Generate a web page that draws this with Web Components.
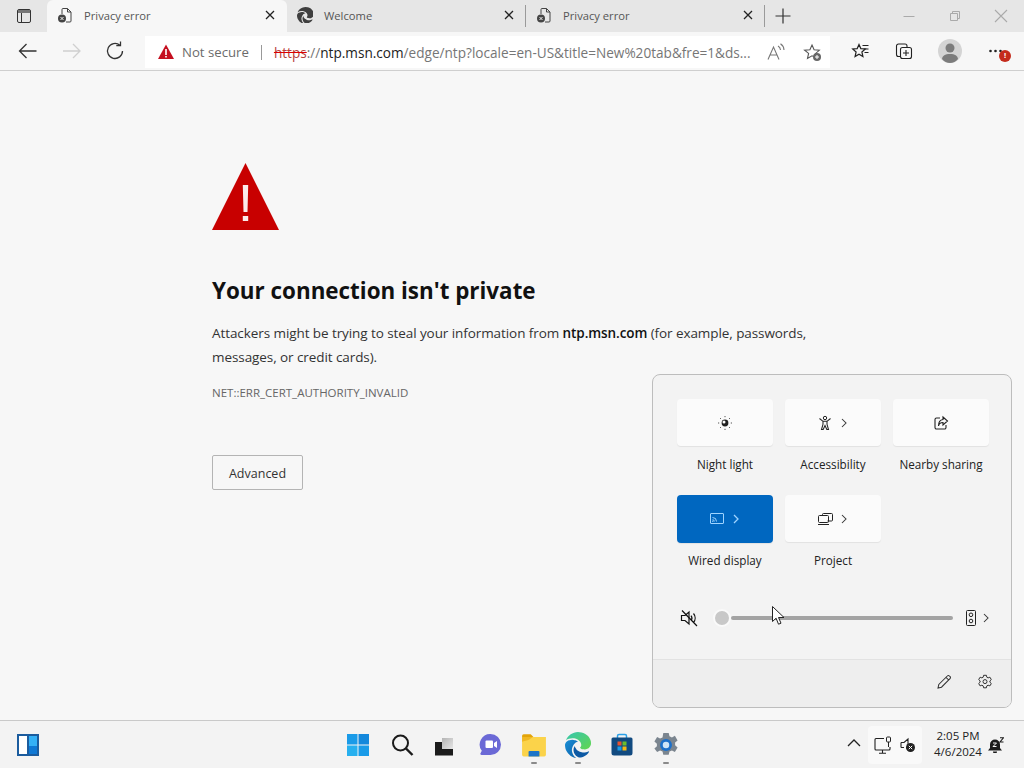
<!DOCTYPE html>
<html lang="en">
<head>
<meta charset="utf-8">
<title>Privacy error</title>
<style>
    html, body { margin: 0; height: 100%; overflow: hidden; }
    body {
        display: flex;
        flex-direction: column;
        width: 1024px;
        height: 768px;
        position: relative;
        background: #f7f7f7;
        color: #1b1b1b;
        font-family: "Open Sans", "Liberation Sans", sans-serif;
    }
</style>
</head>
<body>
<edge-tabstrip>
    <edge-tab active favicon="doc-error">Privacy error</edge-tab>
    <edge-tab favicon="edge-gray">Welcome</edge-tab>
    <edge-tab favicon="doc-error">Privacy error</edge-tab>
</edge-tabstrip>
<edge-toolbar></edge-toolbar>
<error-page></error-page>
<quick-settings>
    <quick-tile label="Night light" icon="night"></quick-tile>
    <quick-tile label="Accessibility" icon="access" more></quick-tile>
    <quick-tile label="Nearby sharing" icon="share"></quick-tile>
    <quick-tile label="Wired display" icon="cast" more on></quick-tile>
    <quick-tile label="Project" icon="project" more></quick-tile>
</quick-settings>
<mouse-cursor></mouse-cursor>
<win-taskbar></win-taskbar>
<script>
    const ICONS = {
        'tabs': '<rect x="2.5" y="2.5" width="13" height="13" rx="1.5" fill="none" stroke="#333"/><path d="M3 3h12v3H3z" fill="#777"/><path d="M6.5 6v9" stroke="#333"/>',
        'doc-error': '<path d="M6 1.500h4.500L14 5v9a1 1 0 0 1-1 1H9M6 1.500a1 1 0 0 0-1 1V7M10.500 1.500V5H14" fill="none" stroke="#444"/><circle cx="5" cy="11.500" r="4" fill="#444"/><path d="M3.500 10l3 3m0-3l-3 3" stroke="#eee"/>',
        'edge-gray': '<g transform="scale(.7)" fill="#3f3f3f"><path d="M21.86 17.86q.14 0 .25.12.1.13.1.25t-.11.33l-.32.46-.43.53-.44.5q-.21.25-.38.42l-.22.23q-.58.53-1.34 1.04-.76.51-1.6.91-.86.4-1.74.64t-1.67.24q-.9 0-1.69-.28-.8-.28-1.48-.78-.68-.5-1.22-1.17-.53-.66-.92-1.44-.38-.77-.58-1.6-.2-.83-.2-1.67 0-1 .32-1.96.33-.97.87-1.8.14.95.55 1.77.41.82 1.02 1.5.6.68 1.38 1.21.78.54 1.64.9.86.36 1.77.56.92.2 1.8.2 1.12 0 2.18-.24 1.06-.23 2.06-.72l.2-.1.2-.05z"/><path d="M6.36 16.59q0 1.1.27 2.15.27 1.06.78 2.03.51.96 1.24 1.77.74.82 1.66 1.4-1.47-.2-2.8-.74-1.33-.55-2.48-1.37-1.15-.83-2.08-1.9-.92-1.07-1.58-2.33T.36 14.94Q0 13.54 0 12.06q0-.81.32-1.49.31-.68.83-1.23.53-.55 1.2-.96.66-.4 1.35-.66.74-.27 1.5-.39.78-.12 1.55-.12.7 0 1.42.1.72.12 1.4.35.68.23 1.32.57.63.35 1.16.83-.35 0-.7.07-.33.07-.65.23v-.02q-.63.28-1.2.74-.57.46-1.05 1.04-.48.58-.87 1.26-.38.67-.65 1.39-.27.71-.42 1.44-.15.72-.15 1.38z"/><path d="M11.96.06q1.7 0 3.33.39 1.63.38 3.07 1.15 1.43.77 2.62 1.93 1.18 1.16 1.98 2.7.49.94.76 1.96.28 1 .28 2.08 0 .89-.23 1.7-.24.8-.69 1.48-.45.68-1.1 1.22-.64.53-1.45.88-.54.24-1.11.36-.58.13-1.16.13-.42 0-.97-.03-.54-.03-1.1-.12-.55-.1-1.05-.28-.5-.19-.84-.5-.12-.09-.23-.24-.1-.16-.1-.33 0-.15.16-.35.16-.2.35-.5.2-.28.36-.68.16-.4.16-.95 0-1.06-.4-1.96-.4-.91-1.06-1.64-.66-.74-1.52-1.28-.86-.55-1.79-.89-.84-.3-1.72-.44-.87-.14-1.76-.14-1.55 0-3.06.45T.94 7.55q.71-1.74 1.81-3.13 1.1-1.38 2.52-2.35Q6.68 1.1 8.37.58q1.7-.52 3.58-.52z"/></g>',
        'close': '<path d="M5 5l8 8m0-8l-8 8" stroke="#222" stroke-width="1.3"/>',
        'plus': '<path d="M9 1.500v15M1.500 9h15" stroke="#333" stroke-width="1.200"/>',
        'min': '<path d="M3.500 9.500h11" stroke="#aaa"/>',
        'restore': '<path d="M4.500 6.500h7v7h-7zM6.500 6V4.500h7v7H12" fill="none" stroke="#aaa"/>',
        'x-win': '<path d="M3 3l12 12m0-12L3 15" stroke="#aaa" stroke-width="1.100"/>',
        'back': '<path d="M20 11H3M10 4l-7 7 7 7" fill="none" stroke="#333" stroke-width="1.300" transform="translate(-.5 0)"/>',
        'forward': '<path d="M2 11h17M12 4l7 7-7 7" fill="none" stroke="#d0d0d0" stroke-width="1.300"/>',
        'refresh': '<path d="M17.500 11a7.500 7.500 0 1 1-2.600-5.700M15.500 1.500v4.200h-4.200" fill="none" stroke="#333" stroke-width="1.300"/>',
        'warn': '<path d="M8 .5L16 15H0z" fill="#c50f1f"/><path d="M8 5v6M8 12v1.600" stroke="#fff" stroke-width="1.600"/>',
        'read': '<path d="M1 16.500L6.500 4l5.500 12.500M3 12h7" fill="none" stroke="#777" stroke-width="1.100"/><path d="M11 3a5 5 0 0 1 2.500 4M13.500 .8a8 8 0 0 1 3.500 6.200" fill="none" stroke="#777" stroke-width="1.100"/>',
        'fav-add': '<path d="M9 2l2.100 4.800 5.200.5-3.900 3.400 1 4.100L9 12.800l-4.500 2.600 1.100-5L1.600 7.200l5.300-.4z" fill="none" stroke="#555" stroke-width="1.100"/><circle cx="14" cy="14" r="4" fill="#666"/><path d="M14 12v4M12 14h4" stroke="#fff"/>',
        'favorites': '<path d="M8 2.500l1.800 4.100 4.500.4-3.400 3 1 4.500L8 12.200 4.100 14.500l1-4.500-3.400-3 4.500-.4z" fill="none" stroke="#222" stroke-width="1.200"/><path d="M11.500 3.500h6M13 7h4.500M13.500 10.500h4" stroke="#222" stroke-width="1.200"/>',
        'collections': '<path d="M5 14.500H3.500a2 2 0 0 1-2-2V4a2 2 0 0 1 2-2H10a2 2 0 0 1 2 2v1" fill="none" stroke="#222" stroke-width="1.100"/><rect x="5.500" y="5.500" width="11" height="11" rx="2" fill="#f7f7f7" stroke="#222" stroke-width="1.100"/><path d="M11 8v6M8 11h6" stroke="#222" stroke-width="1.100"/>',
        'avatar': '<circle cx="12" cy="12" r="12" fill="#d4d4d4"/><circle cx="12" cy="9" r="4.500" fill="#7c7c7c"/><path d="M4 20c.5-3.500 3-5 8-5s7.500 1.500 8 5c-2 2.500-5 4-8 4s-6-1.500-8-4z" fill="#7c7c7c"/>',
        'dots': '<g fill="#222"><circle cx="1.500" cy="6" r="1.300"/><circle cx="6.500" cy="6" r="1.300"/><circle cx="11.500" cy="6" r="1.300"/></g>',
        'night': '<circle cx="8" cy="8" r="3.400" fill="#222"/><circle cx="7" cy="7" r="1.500" fill="#fff"/><path d="M8 1v1.200M8 13.800V15M1 8h1.200M13.800 8H15M3 3l.9.9M12.100 12.100l.9.9M3 13l.9-.9M12.100 3.900l.9-.9" stroke="#555"/>',
        'access': '<circle cx="8" cy="3" r="1.700" fill="none" stroke="#222"/><path d="M2.500 3.500L6 6.300h4l3.500-2.800M6 6.300v3L4.500 14.500h1.700L8 10.500l1.800 4h1.700L10 9.300v-3" fill="none" stroke="#222" stroke-width="1.050"/>',
        'share': '<path d="M7 3H3.500a1.500 1.500 0 0 0-1.500 1.500v8A1.500 1.500 0 0 0 3.500 14h8a1.500 1.500 0 0 0 1.500-1.500V10" fill="none" stroke="#222" stroke-width="1.100"/><path d="M10 2l4.500 4L10 10V7.500C7.500 7.500 6 8.500 5.500 11 5.500 7 7 4.800 10 4.500z" fill="none" stroke="#222" stroke-width="1.100"/>',
        'cast': '<rect x="1.500" y="2.500" width="13" height="10" rx=".5" fill="none" stroke="#9fd4ff"/><path d="M3.500 6.500a4 4 0 0 1 4 4M3.500 8.700a1.800 1.800 0 0 1 1.800 1.800" fill="none" stroke="#9fd4ff"/><circle cx="3.800" cy="10.300" r=".7" fill="#9fd4ff"/>',
        'project': '<rect x="1.500" y="4.500" width="10" height="7" rx="1" fill="#fbfbfb" stroke="#222"/><path d="M5.500 4.500V3.500a1 1 0 0 1 1-1h8a1 1 0 0 1 1 1V9a1 1 0 0 1-1 1h-4" fill="none" stroke="#222"/><path d="M1 13.500h11" stroke="#222"/>',
        'chevron': '<path d="M3 1l4 4-4 4" fill="none" stroke="#333" stroke-width="1.050"/>',
        'chevron-light': '<path d="M3 1l4 4-4 4" fill="none" stroke="#9fd4ff" stroke-width="1.300"/>',
        'mute': '<path d="M1.500 6.500h3.500L9 3v12l-4-3.500H1.500z" fill="none" stroke="#111" stroke-width="1.200"/><path d="M11 6.500a4 4 0 0 1 0 5M13.500 4.500a7 7 0 0 1 0 9M2 1.500l15 15.500" fill="none" stroke="#111" stroke-width="1.200"/>',
        'speaker': '<rect x="3.500" y=".5" width="9" height="15" rx="1" fill="none" stroke="#222"/><circle cx="8" cy="4.800" r="1.800" fill="none" stroke="#222"/><circle cx="8" cy="11" r="1.800" fill="none" stroke="#222"/>',
        'pencil': '<path d="M2 14l.8-3.500L11.300 2a1.500 1.500 0 0 1 2.200 0l.5.500a1.500 1.500 0 0 1 0 2.200L5.500 13.200zM10 3.300L12.700 6" fill="none" stroke="#333" stroke-width="1.050"/>',
        'gear': '<path d="M6.600 1.300h2.800l.4 1.900 1.300.7 1.800-.7 1.400 2.400-1.400 1.300v1.300l1.400 1.300-1.400 2.400-1.800-.7-1.300.7-.4 1.900H6.600l-.4-1.900-1.300-.7-1.800.7-1.400-2.400 1.400-1.300V6.900L1.700 5.600l1.400-2.400 1.800.7 1.300-.7z" fill="none" stroke="#333"/><circle cx="8" cy="7.600" r="2" fill="none" stroke="#333"/>',
        'widgets': '<rect x="1" y="1" width="22" height="22" fill="#1b5c9e"/><rect x="3" y="3" width="8" height="18" fill="#fff"/><rect x="13" y="3" width="8" height="18" fill="#35b1f6"/><rect x="13" y="13" width="8" height="8" fill="#0f78d4"/>',
        'start': '<path d="M1 1h10.500v10.500H1z" fill="#1a9be8"/><path d="M12.500 1H23v10.500H12.500z" fill="#1488dc"/><path d="M1 12.500h10.500V23H1z" fill="#27b0ef"/><path d="M12.500 12.500H23V23H12.500z" fill="#1a9be8"/>',
        'search': '<circle cx="10.500" cy="10" r="7.500" fill="none" stroke="#1a1a1a" stroke-width="2"/><path d="M16 15.500L22.500 22" stroke="#1a1a1a" stroke-width="2.400"/>',
        'taskview': '<defs><linearGradient id="tv" x1="0" y1="0" x2="1" y2="1"><stop offset="0" stop-color="#b4b4b4"/><stop offset="1" stop-color="#e6e6e6"/></linearGradient></defs><rect x="1" y="9" width="18" height="13.500" fill="#1b1b1b"/><rect x="8" y="5" width="11" height="11" fill="url(#tv)"/>',
        'chat': '<path d="M12.500 1a10.500 10.500 0 0 1 0 21H3.500c-1 0-1.500-1-1-1.800l1.300-2.400A10.500 10.500 0 0 1 12.500 1z" fill="#6b69d6"/><rect x="7.500" y="7.500" width="7.500" height="7.500" rx="1" fill="#fff"/><path d="M16 10l3-2v7l-3-2z" fill="#fff"/>',
        'folder': '<path d="M1 3.500A1.500 1.500 0 0 1 2.500 2H9l2.500 2.500h-10.500z" fill="#e3a40a"/><path d="M1 4.500h22V21a1.500 1.500 0 0 1-1.500 1.500h-19A1.500 1.500 0 0 1 1 21z" fill="#fbd34a"/><path d="M1 9c3-1 6-1 8-3l2-1.500H1z" fill="#f0b823"/><path d="M7 19a1 1 0 0 1 1-1.500h8a1 1 0 0 1 1 1.500v3.500H7z" fill="#1b74c8"/>',
        'edge': '<defs><linearGradient id="eg1" x1="0" y1="0" x2="1" y2="1"><stop offset="0" stop-color="#36c6b0"/><stop offset="1" stop-color="#62d64d"/></linearGradient><linearGradient id="eg2" x1="0" y1="0" x2="1" y2="1"><stop offset="0" stop-color="#1a8fd6"/><stop offset="1" stop-color="#0c5fa8"/></linearGradient></defs><path d="M21.86 17.86q.14 0 .25.12.1.13.1.25t-.11.33l-.32.46-.43.53-.44.5q-.21.25-.38.42l-.22.23q-.58.53-1.34 1.04-.76.51-1.6.91-.86.4-1.74.64t-1.67.24q-.9 0-1.69-.28-.8-.28-1.48-.78-.68-.5-1.22-1.17-.53-.66-.92-1.44-.38-.77-.58-1.6-.2-.83-.2-1.67 0-1 .32-1.96.33-.97.87-1.8.14.95.55 1.77.41.82 1.02 1.5.6.68 1.38 1.21.78.54 1.64.9.86.36 1.77.56.92.2 1.8.2 1.12 0 2.18-.24 1.06-.23 2.06-.72l.2-.1.2-.05z" fill="#0c59a4"/><path d="M6.36 16.59q0 1.1.27 2.15.27 1.06.78 2.03.51.96 1.24 1.77.74.82 1.66 1.4-1.47-.2-2.8-.74-1.33-.55-2.48-1.37-1.15-.83-2.08-1.9-.92-1.07-1.58-2.33T.36 14.94Q0 13.54 0 12.06q0-.81.32-1.49.31-.68.83-1.23.53-.55 1.2-.96.66-.4 1.35-.66.74-.27 1.5-.39.78-.12 1.55-.12.7 0 1.42.1.72.12 1.4.35.68.23 1.32.57.63.35 1.16.83-.35 0-.7.07-.33.07-.65.23v-.02q-.63.28-1.2.74-.57.46-1.05 1.04-.48.58-.87 1.26-.38.67-.65 1.39-.27.71-.42 1.44-.15.72-.15 1.38z" fill="url(#eg2)"/><path d="M11.96.06q1.7 0 3.33.39 1.63.38 3.07 1.15 1.43.77 2.62 1.93 1.18 1.16 1.98 2.7.49.94.76 1.96.28 1 .28 2.08 0 .89-.23 1.7-.24.8-.69 1.48-.45.68-1.1 1.22-.64.53-1.45.88-.54.24-1.11.36-.58.13-1.16.13-.42 0-.97-.03-.54-.03-1.1-.12-.55-.1-1.05-.28-.5-.19-.84-.5-.12-.09-.23-.24-.1-.16-.1-.33 0-.15.16-.35.16-.2.35-.5.2-.28.36-.68.16-.4.16-.95 0-1.06-.4-1.96-.4-.91-1.06-1.64-.66-.74-1.52-1.28-.86-.55-1.79-.89-.84-.3-1.72-.44-.87-.14-1.76-.14-1.55 0-3.06.45T.94 7.55q.71-1.74 1.81-3.13 1.1-1.38 2.52-2.35Q6.68 1.1 8.37.58q1.7-.52 3.58-.52z" fill="url(#eg1)"/>',
        'store': '<path d="M7.500 5V3a1.500 1.500 0 0 1 1.500-1.500h6A1.500 1.500 0 0 1 16.500 3v2" fill="none" stroke="#2aa0e8" stroke-width="1.500"/><path d="M1.500 6a1.500 1.500 0 0 1 1.500-1.500h18A1.500 1.500 0 0 1 22.500 6v14a2.500 2.500 0 0 1-2.500 2.500H4A2.500 2.500 0 0 1 1.500 20z" fill="#114a80"/><rect x="7.500" y="8.500" width="4" height="4" fill="#e8522f"/><rect x="12.500" y="8.500" width="4" height="4" fill="#6cbd2b"/><rect x="7.500" y="13.500" width="4" height="4" fill="#1b9be8"/><rect x="12.500" y="13.500" width="4" height="4" fill="#f6b912"/>',
        'settings': '<path d="M9.500 1h5l.7 3 2.300 1 2.700-1.500 2.500 4.300-2.300 2v2.400l2.300 2-2.500 4.300-2.700-1.500-2.300 1-.7 3h-5l-.7-3-2.300-1-2.700 1.500L1.300 15.200l2.300-2v-2.400l-2.300-2 2.500-4.300L6.500 6l2.300-1z" fill="#7b858f"/><circle cx="12" cy="12" r="5.500" fill="#1c6fc9"/><circle cx="12" cy="12" r="3" fill="#cfe4f7"/>',
        'chevron-up': '<path d="M1 8l6-6 6 6" fill="none" stroke="#222" stroke-width="1.300"/>',
        'monitor': '<path d="M10 2.500H2a1 1 0 0 0-1 1V13a1 1 0 0 0 1 1h13a1 1 0 0 0 1-1v-2M8.500 14v3M5 17.200h7" fill="none" stroke="#222" stroke-width="1.100"/><rect x="12.500" y="1" width="4" height="5" rx="1" fill="none" stroke="#222"/><path d="M14.500 6v5" stroke="#222"/>',
        'vol-off': '<path d="M1 5.500h3L8 2v8L6.500 11.500M4 10.500H1zM1 5.500v5" fill="none" stroke="#222" stroke-width="1.100"/><circle cx="10.500" cy="10.500" r="4.500" fill="#222"/><path d="M8.800 8.800l3.400 3.400m0-3.400l-3.400 3.400" stroke="#fff"/>',
        'bell': '<path d="M7 2.500a5 5 0 0 1 5 5v3.500l2 2.500H0l2-2.500V7.500a5 5 0 0 1 5-5z" fill="#1b1b1b"/><path d="M5 14.500h4a2 2 0 0 1-4 0z" fill="#1b1b1b"/><path d="M5 6h3.500L5 9.500h3.500" fill="none" stroke="#f3f3f3"/><path d="M12 .8h3.500L12 5h3.500" fill="none" stroke="#1b1b1b" stroke-width="1.100"/>'
    };

    class WinIcon extends HTMLElement {
        connectedCallback () {
            const size = this.getAttribute('size') || 16;
            const box = this.getAttribute('box') || size;
            if (!this.shadowRoot) {
                this.attachShadow({ mode: 'open' });
            }
            this.shadowRoot.innerHTML = `
                <style>
                    :host { display: inline-flex; flex: none; }
                    svg { display: block; }
                </style>
                <svg width="${size}" height="${size}" viewBox="0 0 ${box} ${box}" aria-hidden="true">${ICONS[this.getAttribute('name')]}</svg>
            `;
        }
    }
    customElements.define('win-icon', WinIcon);

    const tabStripTemplate = document.createElement('template');
    tabStripTemplate.innerHTML = `
        <style>
            :host {
                display: flex;
                flex: none;
                height: 32px;
                background: #e6e6e6;
                align-items: flex-end;
            }
            .tabs-btn {
                width: 47px;
                height: 32px;
                display: flex;
                align-items: center;
                justify-content: center;
            }
            .plus {
                width: 36px;
                display: flex;
                justify-content: center;
                padding-bottom: 7px;
            }
            .controls {
                margin-left: auto;
                display: flex;
                align-self: stretch;
                align-items: center;
            }
            .controls span {
                width: 46px;
                display: flex;
                justify-content: center;
            }
        </style>
        <div class="tabs-btn"><win-icon name="tabs" size="18"></win-icon></div>
        <slot></slot>
        <div class="plus"><win-icon name="plus" size="18"></win-icon></div>
        <div class="controls">
            <span><win-icon name="min" size="18"></win-icon></span>
            <span><win-icon name="restore" size="18"></win-icon></span>
            <span><win-icon name="x-win" size="18"></win-icon></span>
        </div>
    `;

    class EdgeTabstrip extends HTMLElement {
        constructor () {
            super();
            this.attachShadow({ mode: 'open' });
            this.shadowRoot.appendChild(tabStripTemplate.content.cloneNode(true));
        }
    }
    customElements.define('edge-tabstrip', EdgeTabstrip);

    const tabTemplate = document.createElement('template');
    tabTemplate.innerHTML = `
        <style>
            :host {
                display: flex;
                align-items: center;
                box-sizing: border-box;
                width: 239px;
                height: 32px;
                padding: 0 8px 2px 10px;
                font-size: 11.2px;
                color: #555;
                position: relative;
            }
            :host([active]) {
                width: 240px;
                background: #f7f7f7;
                border-radius: 6px 6px 0 0;
            }
            :host(:nth-of-type(2))::after,
            :host(:nth-of-type(3))::after {
                content: "";
                width: 1px;
                height: 22px;
                background: #9a9a9a;
                position: absolute;
                right: 0;
                top: 5px;
            }
            .label { flex: 1; margin-left: 11px; }
            .fav { width: 16px; display: flex; }
        </style>
        <span class="fav"><win-icon id="fav" size="16"></win-icon></span>
        <span class="label"><slot></slot></span>
        <win-icon name="close" size="18"></win-icon>
    `;

    class EdgeTab extends HTMLElement {
        constructor () {
            super();
            this.attachShadow({ mode: 'open' });
            const content = tabTemplate.content.cloneNode(true);
            content.getElementById('fav').setAttribute('name', this.getAttribute('favicon'));
            this.shadowRoot.appendChild(content);
        }
    }
    customElements.define('edge-tab', EdgeTab);

    const toolbarTemplate = document.createElement('template');
    toolbarTemplate.innerHTML = `
        <style>
            :host {
                display: flex;
                flex: none;
                box-sizing: border-box;
                height: 39px;
                padding-left: 6px;
                background: #f7f7f7;
                border-bottom: 1px solid #cfcfcf;
                align-items: center;
            }
            .btn {
                width: 44px;
                display: flex;
                justify-content: center;
                align-items: center;
                height: 32px;
            }
            .omnibox {
                display: flex;
                align-items: center;
                box-sizing: border-box;
                width: 685px;
                height: 32px;
                margin: 2px 8px 0 7px;
                padding-left: 13px;
                background: #fff;
                font-size: 13.2px;
                white-space: nowrap;
            }
            .state { color: #6b6b6b; margin-left: 8px; }
            .sep { width: 1px; height: 15px; background: #999; margin: 0 12px; }
            .url { flex: 1; color: #767676; font-size: 13.6px; }
            .url s { color: #b9403c; text-decoration-color: #d00; }
            .url b { font-weight: 400; color: #222; }
            .omni-btn { width: 36px; display: flex; justify-content: center; }
            .avatar { margin-left: 2px; }
            .menu { position: relative; margin-left: 1px; }
            .badge {
                position: absolute;
                top: 15px;
                left: 26px;
                width: 12px;
                height: 12px;
                border-radius: 50%;
                background: #c42b1c;
                color: #fff;
                font: 700 8px/12px "Liberation Sans", sans-serif;
                text-align: center;
            }
        </style>
        <span class="btn"><win-icon name="back" size="22"></win-icon></span>
        <span class="btn"><win-icon name="forward" size="22"></win-icon></span>
        <span class="btn"><win-icon name="refresh" size="22"></win-icon></span>
        <div class="omnibox">
            <win-icon name="warn" size="16"></win-icon>
            <span class="state">Not secure</span>
            <span class="sep"></span>
            <span class="url"><s>https</s>://<b>ntp.msn.com</b>/edge/ntp?locale=en-US&amp;title=New%20tab&amp;fre=1&amp;ds...</span>
            <span class="omni-btn"><win-icon name="read" size="18"></win-icon></span>
            <span class="omni-btn"><win-icon name="fav-add" size="18"></win-icon></span>
        </div>
        <span class="btn"><win-icon name="favorites" size="18"></win-icon></span>
        <span class="btn"><win-icon name="collections" size="18"></win-icon></span>
        <span class="btn avatar"><win-icon name="avatar" size="24"></win-icon></span>
        <span class="btn menu"><win-icon name="dots" size="13"></win-icon><span class="badge">!</span></span>
    `;

    class EdgeToolbar extends HTMLElement {
        constructor () {
            super();
            this.attachShadow({ mode: 'open' });
            this.shadowRoot.appendChild(toolbarTemplate.content.cloneNode(true));
        }
    }
    customElements.define('edge-toolbar', EdgeToolbar);

    const errorTemplate = document.createElement('template');
    errorTemplate.innerHTML = `
        <style>
            :host {
                display: block;
                flex: 1;
                min-height: 0;
                box-sizing: border-box;
                padding: 92px 0 0 212px;
                background: #f7f7f7;
            }
            svg { display: block; }
            h1 {
                margin: 43px 0 0;
                font-size: 22.4px;
                line-height: 34px;
                font-weight: 700;
                color: #111;
            }
            p {
                margin: 13px 0 0;
                width: 612px;
                font-size: 13.5px;
                letter-spacing: -.08px;
                line-height: 24px;
                color: #333;
            }
            p b { color: #111; font-weight: 600; }
            .code {
                margin-top: 16px;
                font-size: 11.5px;
                line-height: 16px;
                color: #666;
            }
            .advanced {
                display: flex;
                align-items: center;
                justify-content: center;
                box-sizing: border-box;
                width: 91px;
                height: 35px;
                margin-top: 54px;
                padding-top: 1px;
                border: 1px solid #b4b4b4;
                border-radius: 2px;
                font-size: 12.5px;
                color: #333;
            }
        </style>
        <svg width="68" height="68" viewBox="0 0 68 68" aria-hidden="true">
            <path d="M33.500 0L67 67H0z" fill="#c80000"/>
            <path d="M30.800 22h5.400l-.7 27h-4zM30.800 53h5.400v5h-5.400z" fill="#fbeaea"/>
        </svg>
        <h1>Your connection isn't private</h1>
        <p>Attackers might be trying to steal your information from <b>ntp.msn.com</b> (for example, passwords,<br>messages, or credit cards).</p>
        <div class="code">NET::ERR_CERT_AUTHORITY_INVALID</div>
        <div class="advanced">Advanced</div>
    `;

    class ErrorPage extends HTMLElement {
        constructor () {
            super();
            this.attachShadow({ mode: 'open' });
            this.shadowRoot.appendChild(errorTemplate.content.cloneNode(true));
        }
    }
    customElements.define('error-page', ErrorPage);

    const tileTemplate = document.createElement('template');
    tileTemplate.innerHTML = `
        <style>
            :host {
                display: block;
                width: 96px;
                height: 96px;
                text-align: center;
                font-size: 11.7px;
                color: #222;
            }
            .btn {
                display: flex;
                align-items: center;
                justify-content: center;
                gap: 6px;
                height: 47px;
                background: #fbfbfb;
                border-radius: 4px;
                box-shadow: 0 1px 1px rgba(0, 0, 0, .07);
            }
            :host([on]) .btn {
                background: #0067c0;
                height: 48px;
                margin-bottom: -1px;
            }
            .more { display: none; }
            :host([more]) .more { display: block; }
            .label { margin-top: 9px; line-height: 18px; white-space: nowrap; }
        </style>
        <div class="btn">
            <win-icon id="icon" size="16"></win-icon>
            <win-icon id="chev" class="more" size="10"></win-icon>
        </div>
        <div class="label"></div>
    `;

    class QuickTile extends HTMLElement {
        constructor () {
            super();
            this.attachShadow({ mode: 'open' });
            const content = tileTemplate.content.cloneNode(true);
            content.getElementById('icon').setAttribute('name', this.getAttribute('icon'));
            content.getElementById('chev').setAttribute('name', this.hasAttribute('on') ? 'chevron-light' : 'chevron');
            content.querySelector('.label').textContent = this.getAttribute('label');
            this.shadowRoot.appendChild(content);
        }
    }
    customElements.define('quick-tile', QuickTile);

    const panelTemplate = document.createElement('template');
    panelTemplate.innerHTML = `
        <style>
            /* flyout sits over the page, so it is the one absolute box here */
            :host {
                position: absolute;
                left: 652px;
                top: 374px;
                width: 360px;
                height: 334px;
                box-sizing: border-box;
                display: flex;
                flex-direction: column;
                background: #f3f3f3;
                border: 1px solid #bdbdbd;
                border-radius: 8px;
                overflow: hidden;
            }
            .tiles {
                display: grid;
                grid-template-columns: repeat(3, 96px);
                column-gap: 12px;
                padding: 24px 24px 0;
            }
            .volume {
                display: flex;
                align-items: center;
                height: 54px;
                padding-left: 27px;
            }
            .thumb {
                box-sizing: border-box;
                width: 18px;
                height: 18px;
                margin-left: 15px;
                border-radius: 50%;
                background: #c8c8c8;
                border: 2px solid #fafafa;
            }
            .track {
                width: 222px;
                height: 4px;
                border-radius: 2px;
                background: #a3a3a3;
            }
            .device { margin: 0 2px 0 10px; }
            .footer {
                flex: 1;
                margin-top: 14px;
                display: flex;
                align-items: center;
                justify-content: flex-end;
                gap: 25px;
                padding: 0 18px 3px 0;
                background: #eeeeee;
                border-top: 1px solid #e2e2e2;
            }
        </style>
        <div class="tiles"><slot></slot></div>
        <div class="volume">
            <win-icon name="mute" size="18"></win-icon>
            <span class="thumb"></span>
            <span class="track"></span>
            <win-icon class="device" name="speaker" size="16"></win-icon>
            <win-icon name="chevron" size="10"></win-icon>
        </div>
        <div class="footer">
            <win-icon name="pencil" size="16"></win-icon>
            <win-icon name="gear" size="16"></win-icon>
        </div>
    `;

    class QuickSettings extends HTMLElement {
        constructor () {
            super();
            this.attachShadow({ mode: 'open' });
            this.shadowRoot.appendChild(panelTemplate.content.cloneNode(true));
        }
    }
    customElements.define('quick-settings', QuickSettings);

    const taskbarTemplate = document.createElement('template');
    taskbarTemplate.innerHTML = `
        <style>
            :host {
                display: grid;
                flex: none;
                grid-template-columns: 1fr auto 1fr;
                align-items: center;
                box-sizing: border-box;
                height: 48px;
                background: #f3f3f3;
                border-top: 1px solid #c9c9c9;
            }
            .left { padding-left: 16px; display: flex; }
            .apps { display: flex; }
            .app {
                position: relative;
                width: 44px;
                height: 47px;
                display: flex;
                align-items: center;
                justify-content: center;
            }
            .app[running]::after {
                content: "";
                position: absolute;
                bottom: 4px;
                left: 19px;
                width: 6px;
                height: 2px;
                border-radius: 1px;
                background: #8a8a8a;
            }
            .tray {
                display: flex;
                align-items: center;
                justify-content: flex-end;
                padding-right: 20px;
            }
            .group {
                display: flex;
                align-items: center;
                gap: 8px;
                height: 38px;
                margin: 0 8px 0 7px;
                padding: 0 6px;
                background: #f9f9f9;
                border-radius: 4px;
            }
            .clock {
                width: 56px;
                padding-bottom: 2px;
                text-align: center;
                font-size: 11.5px;
                line-height: 16px;
                color: #222;
            }
            .bell { margin-left: 2px; display: flex; }
        </style>
        <div class="left"><win-icon name="widgets" size="24"></win-icon></div>
        <div class="apps">
            <span class="app"><win-icon name="start" size="24"></win-icon></span>
            <span class="app"><win-icon name="search" size="24"></win-icon></span>
            <span class="app"><win-icon name="taskview" size="24"></win-icon></span>
            <span class="app"><win-icon name="chat" size="24"></win-icon></span>
            <span class="app" running><win-icon name="folder" size="26" box="24"></win-icon></span>
            <span class="app" running><win-icon name="edge" size="26" box="24"></win-icon></span>
            <span class="app"><win-icon name="store" size="24"></win-icon></span>
            <span class="app" running><win-icon name="settings" size="26" box="24"></win-icon></span>
        </div>
        <div class="tray">
            <win-icon name="chevron-up" size="14"></win-icon>
            <div class="group">
                <win-icon name="monitor" size="18"></win-icon>
                <win-icon name="vol-off" size="16"></win-icon>
            </div>
            <div class="clock">2:05 PM<br>4/6/2024</div>
            <span class="bell"><win-icon name="bell" size="16"></win-icon></span>
        </div>
    `;

    class WinTaskbar extends HTMLElement {
        constructor () {
            super();
            this.attachShadow({ mode: 'open' });
            this.shadowRoot.appendChild(taskbarTemplate.content.cloneNode(true));
        }
    }
    customElements.define('win-taskbar', WinTaskbar);

    const cursorTemplate = document.createElement('template');
    cursorTemplate.innerHTML = `
        <style>
            :host { position: absolute; left: 772px; top: 606px; display: block; }
            svg { display: block; }
        </style>
        <svg width="13" height="20" viewBox="0 0 13 20" aria-hidden="true">
            <path d="M.5.5v15l3.600-3.300 2.400 6 2.500-1-2.500-5.700H12z" fill="#fff" stroke="#222"/>
        </svg>
    `;

    class MouseCursor extends HTMLElement {
        constructor () {
            super();
            this.attachShadow({ mode: 'open' });
            this.shadowRoot.appendChild(cursorTemplate.content.cloneNode(true));
        }
    }
    customElements.define('mouse-cursor', MouseCursor);
</script>
</body>
</html>
